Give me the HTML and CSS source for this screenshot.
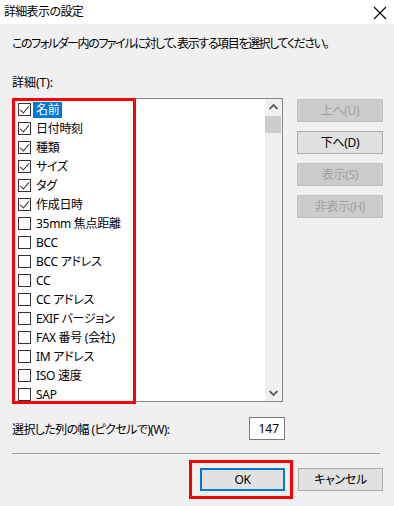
FILE: index.html
```html
<!DOCTYPE html>
<html lang="ja">
<head>
<meta charset="utf-8">
<title>詳細表示の設定</title>
<link rel="stylesheet" href="styles.css">
</head>
<body>
<div class="window">
  <div class="titlebar">
    <span class="title">詳細表示の設定</span>
    <svg class="close" width="14" height="14" viewBox="0 0 14 14"><path d="M1 1 L13 13 M13 1 L1 13" stroke="#000" stroke-width="1.1" fill="none"/></svg>
  </div>
  <div class="dialog">
    <p class="desc">このフォルダー内のファイルに対して、表示する項目を選択してください。</p>
    <p class="label">詳細(T):</p>
    <div class="main">
      <div class="listbox">
        <ul class="items">
          <li class="item"><span class="cb on"></span><span class="txt sel">名前</span></li>
          <li class="item"><span class="cb on"></span><span class="txt">日付時刻</span></li>
          <li class="item"><span class="cb on"></span><span class="txt">種類</span></li>
          <li class="item"><span class="cb on"></span><span class="txt">サイズ</span></li>
          <li class="item"><span class="cb on"></span><span class="txt">タグ</span></li>
          <li class="item"><span class="cb on"></span><span class="txt">作成日時</span></li>
          <li class="item"><span class="cb"></span><span class="txt">35mm 焦点距離</span></li>
          <li class="item"><span class="cb"></span><span class="txt">BCC</span></li>
          <li class="item"><span class="cb"></span><span class="txt">BCC アドレス</span></li>
          <li class="item"><span class="cb"></span><span class="txt">CC</span></li>
          <li class="item"><span class="cb"></span><span class="txt">CC アドレス</span></li>
          <li class="item"><span class="cb"></span><span class="txt">EXIF バージョン</span></li>
          <li class="item"><span class="cb"></span><span class="txt">FAX 番号 (会社)</span></li>
          <li class="item"><span class="cb"></span><span class="txt">IM アドレス</span></li>
          <li class="item"><span class="cb"></span><span class="txt">ISO 速度</span></li>
          <li class="item"><span class="cb"></span><span class="txt">SAP</span></li>
        </ul>
        <div class="scrollbar">
          <div class="sb-btn"><svg width="17" height="17" viewBox="0 0 17 17"><path d="M4.5 10 L8.5 6 L12.5 10" stroke="#606060" stroke-width="1.8" fill="none"/></svg></div>
          <div class="sb-thumb"></div>
          <div class="sb-track"></div>
          <div class="sb-btn"><svg width="17" height="17" viewBox="0 0 17 17"><path d="M4.5 7 L8.5 11 L12.5 7" stroke="#606060" stroke-width="1.8" fill="none"/></svg></div>
        </div>
        <div class="mark mark-list"></div>
      </div>
      <div class="side">
        <div class="btn disabled">上へ(U)</div>
        <div class="btn">下へ(D)</div>
        <div class="btn disabled">表示(S)</div>
        <div class="btn disabled">非表示(H)</div>
      </div>
    </div>
    <div class="width-row">
      <span class="width-label">選択した列の幅 (ピクセルで)(W):</span>
      <span class="input">147</span>
    </div>
    <div class="sep"></div>
    <div class="footer">
      <div class="btn default">OK<span class="mark mark-ok"></span></div>
      <div class="btn">キャンセル</div>
    </div>
  </div>
</div>
</body>
</html>
```
FILE: styles.css
```css
* { box-sizing: border-box; }
html, body { margin: 0; padding: 0; }
body {
  width: 394px;
  height: 506px;
  overflow: hidden;
  background: #f0f0f0;
  font-family: "Noto Sans", "Noto Sans CJK JP", sans-serif;
  font-size: 12px;
  color: #000;
  font-feature-settings: "palt";
}
.titlebar {
  height: 24px;
  background: #fff;
  display: flex;
  align-items: center;
  justify-content: space-between;
  padding-left: 4px;
  padding-right: 7px;
}
.title { font-size: 12px; line-height: 16px; font-feature-settings: normal; letter-spacing: -0.7px; }
.close { display: block; margin-top: 1px; }
.dialog { padding: 0 11px 0 12px; }
.desc { margin: 12px 0 0; line-height: 16px; white-space: nowrap; letter-spacing: -1.4px; }
.label { margin: 23px 0 0; line-height: 16px; }
.main { display: flex; gap: 14px; margin-top: 7px; }
.listbox {
  position: relative;
  width: 271px;
  height: 304px;
  border: 1px solid #828790;
  background: #fff;
  display: flex;
}
.items {
  list-style: none;
  margin: 0;
  padding: 1px 0 0;
  flex: 1;
  overflow: hidden;
}
.item {
  height: 19px;
  display: flex;
  align-items: center;
  padding-left: 5px;
  white-space: nowrap;
}
.cb {
  width: 13px;
  height: 13px;
  border: 1px solid #333;
  background: #fff;
  flex: none;
  margin-right: 2px;
  position: relative;
}
.cb.on::after {
  content: "";
  position: absolute;
  left: 3px;
  top: 0px;
  width: 4px;
  height: 8px;
  border-right: 1.5px solid #333;
  border-bottom: 1.5px solid #333;
  transform: rotate(40deg);
}
.txt { padding: 0 3px 0 3px; line-height: 16px; letter-spacing: -0.3px; }
.txt.sel { background: #0078d7; color: #fff; }
.scrollbar {
  width: 17px;
  background: #f0f0f0;
  display: flex;
  flex-direction: column;
}
.sb-btn { height: 17px; }
.sb-btn svg { display: block; }
.sb-thumb { height: 17px; margin-right: 1px; background: #cdcdcd; }
.sb-track { flex: 1; }
.mark {
  position: absolute;
  border: 3px solid #f00;
  pointer-events: none;
}
.mark-list { left: -1px; top: -1px; width: 124px; height: 306px; }
.side { width: 86px; display: flex; flex-direction: column; gap: 9px; padding-top: 1px; }
.btn {
  position: relative;
  height: 23px;
  border: 1px solid #adadad;
  background: #e1e1e1;
  display: flex;
  align-items: center;
  justify-content: center;
  line-height: 16px;
  letter-spacing: -0.3px;
}
.btn.disabled { background: #cccccc; border-color: #bfbfbf; color: #a0a0a0; }
.width-row { display: flex; align-items: center; margin-top: 15px; }
.width-label { width: 237px; letter-spacing: -0.6px; }
.input {
  width: 36px;
  height: 23px;
  border: 1px solid #7a7a7a;
  background: #fff;
  display: flex;
  align-items: center;
  justify-content: flex-end;
  padding-right: 5px;
}
.sep { height: 1px; background: #a0a0a0; margin: 13px 3px 0 0; }
.footer { display: flex; justify-content: flex-end; gap: 13px; margin-top: 14px; }
.footer .btn { width: 85px; }
.btn.default { border: 2px solid #0078d7; }
.mark-ok { left: -13px; top: -10px; right: -10px; bottom: -10px; }
```
